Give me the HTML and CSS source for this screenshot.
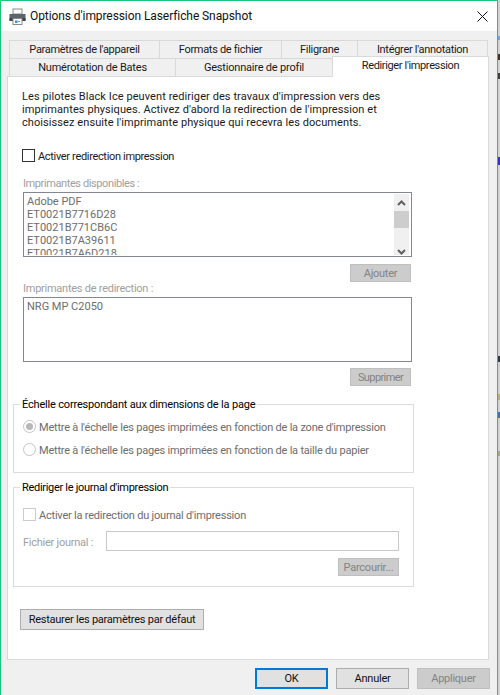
FILE: index.html
```html
<!DOCTYPE html>
<html lang="fr">
<head>
<meta charset="utf-8">
<title>Options d'impression Laserfiche Snapshot</title>
<link rel="stylesheet" href="styles.css">
</head>
<body>
<div class="window">
  <header class="titlebar">
    <svg class="app-icon" width="17" height="17" viewBox="0 0 17 17"><rect x="4" y="1" width="9" height="5" fill="#fff" stroke="#8a8a8a"/><rect x="0.5" y="6" width="16" height="6.5" fill="#5f6468"/><rect x="0.5" y="10" width="16" height="3" fill="#3f4347"/><rect x="4" y="10.5" width="9" height="6" fill="#fff" stroke="#8a8a8a"/><rect x="6" y="12.5" width="2.5" height="2.5" fill="#2f8fd8"/><rect x="9" y="13" width="2" height="1" fill="#888"/></svg>
    <span class="title">Options d'impression Laserfiche Snapshot</span>
    <svg class="close" width="11" height="11" viewBox="0 0 11 11"><path d="M0.5 0.5L10.5 10.5M10.5 0.5L0.5 10.5" stroke="#111" stroke-width="1" fill="none"/></svg>
  </header>
  <div class="tabs">
    <div class="tab-row">
      <div class="tab w150">Paramètres de l'appareil</div>
      <div class="tab w122">Formats de fichier</div>
      <div class="tab w76">Filigrane</div>
      <div class="tab w130">Intégrer l'annotation</div>
    </div>
    <div class="tab-row">
      <div class="tab w166 wide">Numérotation de Bates</div>
      <div class="tab w157 near">Gestionnaire de profil</div>
      <div class="tab active">Rediriger l'impression</div>
    </div>
  </div>
  <main class="panel">
    <p class="intro">Les pilotes Black Ice peuvent rediriger des travaux d'impression vers des<br>imprimantes physiques. Activez d'abord la redirection de l'impression et<br>choisissez ensuite l'imprimante physique qui recevra les documents.</p>
    <label class="check-row main-check"><span class="box"></span>Activer redirection impression</label>

    <section class="printers">
      <div class="field-label tight">Imprimantes disponibles :</div>
      <div class="listbox">
        <ul class="items">
          <li>Adobe PDF</li>
          <li>ET0021B7716D28</li>
          <li>ET0021B771CB6C</li>
          <li>ET0021B7A39611</li>
          <li>ET0021B7A6D218</li>
        </ul>
        <div class="scrollbar">
          <svg class="arrow" width="9" height="6" viewBox="0 0 9 6"><path d="M1 5L4.5 1.5L8 5" stroke="#606060" stroke-width="2" fill="none"/></svg>
          <div class="thumb"></div>
          <svg class="arrow" width="9" height="6" viewBox="0 0 9 6"><path d="M1 1L4.5 4.5L8 1" stroke="#606060" stroke-width="2" fill="none"/></svg>
        </div>
      </div>
      <div class="btn-row add"><button class="btn disabled small">Ajouter</button></div>
      <div class="field-label">Imprimantes de redirection :</div>
      <div class="listbox">
        <ul class="items"><li>NRG MP C2050</li></ul>
      </div>
      <div class="btn-row remove"><button class="btn disabled small squeeze">Supprimer</button></div>
    </section>

    <section class="group scale">
      <span class="legend">Échelle correspondant aux dimensions de la page</span>
      <div class="radio-row"><span class="radio on"></span>Mettre à l'échelle les pages imprimées en fonction de la zone d'impression</div>
      <div class="radio-row second"><span class="radio"></span>Mettre à l'échelle les pages imprimées en fonction de la taille du papier</div>
    </section>

    <section class="group journal">
      <span class="legend short">Rediriger le journal d'impression</span>
      <div class="radio-row"><span class="box off"></span>Activer la redirection du journal d'impression</div>
      <div class="file-row"><span class="file-label">Fichier journal :</span><span class="input"></span></div>
      <div class="btn-row browse"><button class="btn disabled small">Parcourir...</button></div>
    </section>

    <button class="btn restore">Restaurer les paramètres par défaut</button>
  </main>
  <footer class="footer">
    <button class="btn foot default">OK</button>
    <button class="btn foot">Annuler</button>
    <button class="btn foot disabled">Appliquer</button>
  </footer>
</div>
<aside class="desktop">
  <i class="mark m1"></i><i class="mark m2"></i><i class="mark m3"></i><i class="mark m4"></i><i class="mark m5"></i><i class="mark m6"></i><i class="mark m7"></i><i class="mark m8"></i>
</aside>
</body>
</html>
```
FILE: styles.css
```css
* { box-sizing: border-box; }
html, body { margin: 0; padding: 0; }
body {
  width: 500px;
  height: 695px;
  display: flex;
  background: #fff;
  overflow: hidden;
  font-family: Roboto, "Liberation Sans", sans-serif;
  font-size: 11px;
  color: #1a1a1a;
}
.window {
  width: 498px;
  height: 695px;
  flex: none;
  background: #f0f0f0;
  border-left: 1px solid #19c77a;
  border-top: 1px solid #19c77a;
  border-right: 1px solid #19c77a;
}
.desktop { position: relative; width: 2px; flex: none; background: #d2d2d2; }
.mark { position: absolute; left: 0; width: 2px; height: 4px; }
.m1 { top: 36px; background: #6fa8dc; }
.m2 { top: 54px; height: 6px; background: #4a3020; }
.m3 { top: 73px; height: 6px; background: #40403a; }
.m4 { top: 157px; height: 8px; background: #3030d0; }
.m5 { top: 356px; height: 6px; background: #303848; }
.m6 { top: 394px; height: 6px; background: #b8b070; }
.m7 { top: 412px; height: 6px; background: #3a70b8; }
.m8 { top: 451px; height: 5px; background: #a8a880; }
.titlebar {
  height: 30px;
  background: #fff;
  display: flex;
  align-items: center;
  padding-left: 8px;
  padding-right: 9px;
}
.app-icon { flex: none; }
.title { margin-left: 4px; font-size: 12px; letter-spacing: -0.08px; color: #111; flex: 1; white-space: nowrap; }
.close { flex: none; }
.tabs { margin-top: 9px; margin-left: 8px; }
.tab-row { display: flex; height: 18px; }
.tab {
  display: flex;
  align-items: center;
  justify-content: center;
  background: #f0f0f0;
  border: 1px solid #d9d9d9;
  border-bottom: 0;
  margin-right: -1px;
  white-space: nowrap;
  letter-spacing: -0.3px;
}
.w150 { width: 151px; }
.w122 { width: 123px; }
.w76 { width: 77px; }
.w130 { width: 131px; }
.w166 { width: 167px; }
.w157 { width: 158px; }
.wide { letter-spacing: -0.2px; }
.near { letter-spacing: -0.2px; }
.active {
  position: relative;
  z-index: 1;
  width: 157px;
  height: 21px;
  margin-top: -2px;
  background: #fff;
  padding-bottom: 1px;
  align-items: flex-start;
  padding-top: 2px;
  letter-spacing: -0.36px;
}
.panel {
  margin-left: 6px;
  width: 482px;
  height: 584px;
  background: #fff;
  border: 1px solid #d9d9d9;
  padding-top: 13px;
}
.intro { margin: 0 0 0 14px; line-height: 13px; white-space: nowrap; letter-spacing: 0.08px; }
.check-row { display: flex; align-items: flex-start; height: 13px; line-height: 15px; white-space: nowrap; letter-spacing: -0.33px; }
.main-check { margin: 20px 0 0 14px; }
.box {
  width: 13px;
  height: 13px;
  flex: none;
  border: 1px solid #333;
  background: #fff;
  margin-right: 3px;
}
.box.off { border-color: #ccc; }
.printers { margin-left: 15px; width: 389px; margin-top: 15px; }
.field-label { height: 13px; line-height: 13px; color: #a0a0a0; letter-spacing: -0.25px; }
.field-label.tight { letter-spacing: -0.4px; }
.listbox {
  margin-top: 2px;
  height: 65px;
  border: 1px solid #828790;
  display: flex;
  overflow: hidden;
  padding: 1px;
}
.items {
  list-style: none;
  margin: 0;
  padding: 1px 0 0 2px;
  flex: 1;
  color: #6d6d6d;
  line-height: 13px;
  overflow: hidden;
}
.scrollbar {
  width: 15px;
  flex: none;
  background: #f0f0f0;
  margin-right: 1px;
  display: flex;
  flex-direction: column;
  align-items: center;
  justify-content: flex-start;
}
.arrow { margin-top: 6px; flex: none; }
.thumb { width: 15px; height: 17px; margin-top: 5px; background: #cdcdcd; flex: none; margin-bottom: 21px; }
.thumb + .arrow { margin-top: 0; }
.btn-row { display: flex; justify-content: flex-end; }
.add { margin-top: 7px; }
.remove { margin-top: 6px; }
.btn-row.add, .btn-row.remove { padding-right: 1px; }
.btn {
  font: inherit;
  padding: 0;
  color: #111;
  background: #e1e1e1;
  border: 1px solid #adadad;
  white-space: nowrap;
  letter-spacing: -0.25px;
}
.disabled { background: #cccccc; border-color: #bfbfbf; color: #838383; }
.small { width: 61px; height: 18px; line-height: 15px; }
.squeeze { letter-spacing: -0.6px; }
.group {
  position: relative;
  margin-left: 5px;
  width: 401px;
  border: 1px solid #dcdcdc;
  padding-left: 9px;
  padding-right: 14px;
}
.legend {
  position: absolute;
  left: 6px;
  top: -7px;
  height: 13px;
  line-height: 13px;
  padding: 0 2px;
  background: #fff;
  color: #000;
  white-space: nowrap;
  letter-spacing: -0.18px;
}
.legend.short { letter-spacing: -0.3px; }
.scale { margin-top: 18px; height: 69px; padding-top: 15px; }
.journal { margin-top: 14px; height: 100px; padding-top: 20px; }
.radio-row { display: flex; align-items: flex-start; height: 13px; line-height: 15px; color: #6d6d6d; white-space: nowrap; letter-spacing: -0.21px; }
.second { margin-top: 10px; }
.radio {
  width: 13px;
  height: 13px;
  flex: none;
  border: 1px solid #c4c4c4;
  border-radius: 50%;
  background: #fff;
  margin-right: 3px;
  display: flex;
  align-items: center;
  justify-content: center;
}
.radio.on::after { content: ""; width: 7px; height: 7px; border-radius: 50%; background: #b8b8b8; }
.file-row { display: flex; align-items: center; margin-top: 10px; height: 20px; color: #a0a0a0; white-space: nowrap; letter-spacing: -0.25px; }
.file-label { width: 83px; flex: none; padding-top: 2px; }
.input { width: 293px; height: 20px; border: 1px solid #c8c8c8; background: #fff; }
.browse { margin-top: 7px; }
.restore { display: block; margin: 22px 0 0 12px; width: 184px; height: 21px; }
.footer { display: flex; justify-content: flex-end; gap: 8px; margin-top: 8px; padding-right: 7px; }
.foot { width: 73px; height: 21px; }
.default { border: 2px solid #0078d7; }
```
